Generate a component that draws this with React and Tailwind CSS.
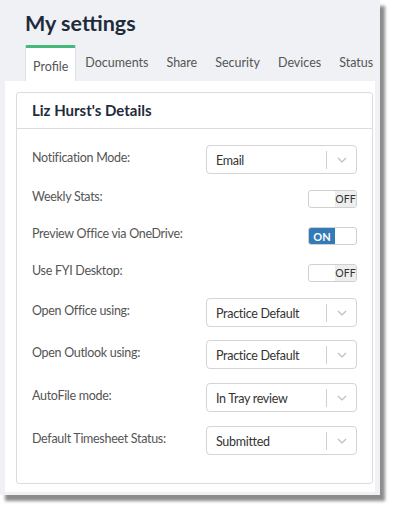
import React from "react";

const font = { fontFamily: 'Lato, "Noto Sans", Arial, sans-serif' };

function Select({ value }) {
  return (
    <div className="w-[151px] h-[29px] border border-[#d4d4d4] rounded-[4px] bg-white flex items-center">
      <span className="flex-1 pl-[9px] pt-[3px] text-[12.5px] tracking-[-0.3px] text-[#333]">{value}</span>
      <span className="w-px h-[18px] bg-[#d0d0d0]" />
      <span className="w-[29px] flex items-center justify-center">
        <svg width="10" height="6" viewBox="0 0 10 6" fill="none">
          <path d="M1 1l4 4 4-4" stroke="#bdbdbd" strokeWidth="1.2" />
        </svg>
      </span>
    </div>
  );
}

function Toggle({ on }) {
  return (
    <div className="w-[49px] h-[18px] border border-[#d0d0d0] rounded-[3px] bg-white flex overflow-hidden">
      {on ? (
        <>
          <span className="w-[26px] h-full bg-[#337ab7] text-white text-[11px] font-bold flex items-center justify-center leading-none">ON</span>
          <span className="flex-1" />
        </>
      ) : (
        <>
          <span className="w-[26px]" />
          <span className="flex-1 h-full bg-[#eeeeee] text-[#333] text-[10.5px] flex items-center justify-center leading-none">OFF</span>
        </>
      )}
    </div>
  );
}

function Row({ label, children, mt }) {
  return (
    <div className={`flex items-center justify-between ${mt}`}>
      <span className="text-[12.5px] tracking-[-0.3px] text-[#555] -mt-[3px]">{label}</span>
      {children}
    </div>
  );
}

export default function App() {
  const tabs = ["Documents", "Share", "Security", "Devices", "Status"];
  return (
    <div className="w-[393px] h-[511px] bg-white" style={font}>
      <div className="w-[380px] h-[495px] bg-[#eff1f4] shadow-[5px_6px_3px_rgba(0,0,0,0.45)] flex flex-col">
        <div className="pl-[25px] pt-[9px] h-[45px]">
          <h1 className="text-[21.5px] font-bold text-[#1e2b3b] leading-[28px]">My settings</h1>
        </div>
        <div className="flex pl-[25px] h-[36px] items-stretch">
          <div className="bg-white border-t-[3px] border-t-[#45b97c] border-x border-x-[#dde0e4] px-[7px] pt-[10px] text-[12.5px] text-[#555] rounded-t-[2px]">
            Profile
          </div>
          {tabs.map((t) => (
            <div key={t} className="px-[9px] pt-[9px] text-[12.5px] text-[#555]">
              {t}
            </div>
          ))}
        </div>
        <div className="mx-[5px] bg-white h-[411px] pl-[11px] pr-[2px] pt-[11px]">
          <div className="border border-[#dcdcdc] rounded-[3px] h-[392px]">
            <div className="h-[36px] border-b border-[#dcdcdc] pl-[15px] flex items-center">
              <span className="text-[15px] font-bold text-[#1e2b3b]">Liz Hurst's Details</span>
            </div>
            <div className="pl-[15px] pr-[15px] pt-[16px]">
              <Row label="Notification Mode:" mt="mt-0"><Select value="Email" /></Row>
              <Row label="Weekly Stats:" mt="mt-[16px]"><Toggle /></Row>
              <Row label="Preview Office via OneDrive:" mt="mt-[19px]"><Toggle on /></Row>
              <Row label="Use FYI Desktop:" mt="mt-[19px]"><Toggle /></Row>
              <Row label="Open Office using:" mt="mt-[16px]"><Select value="Practice Default" /></Row>
              <Row label="Open Outlook using:" mt="mt-[13px]"><Select value="Practice Default" /></Row>
              <Row label="AutoFile mode:" mt="mt-[14px]"><Select value="In Tray review" /></Row>
              <Row label="Default Timesheet Status:" mt="mt-[14px]"><Select value="Submitted" /></Row>
            </div>
          </div>
        </div>
      </div>
    </div>
  );
}
